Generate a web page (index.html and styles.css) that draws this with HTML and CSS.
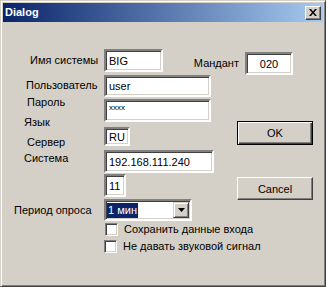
FILE: index.html
```html
<!DOCTYPE html>
<html>
<head>
<meta charset="utf-8">
<link rel="stylesheet" href="styles.css">
</head>
<body>
<div class="window">
  <div class="titlebar">
    <span class="title">Dialog</span>
    <span class="close"><svg width="8" height="7" viewBox="0 0 8 7"><path d="M0 0h2l2 2.5L6 0h2L5 3.5 8 7H6L4 4.5 2 7H0l3-3.5z" fill="#000"/></svg></span>
  </div>
  <div class="client">
    <div class="labels">
      <div class="label l-name">Имя системы</div>
      <div class="label l-user">Пользователь</div>
      <div class="label l-pass">Пароль</div>
      <div class="label l-lang">Язык</div>
      <div class="label l-server">Сервер</div>
      <div class="label l-system">Система</div>
      <div class="label l-period">Период опроса</div>
    </div>
    <div class="controls">
      <div class="row r1">
        <div class="edit e-name">BIG</div>
        <div class="label mandant-label">Мандант</div>
        <div class="edit e-mandant">020</div>
      </div>
      <div class="row r2"><div class="edit e-user">user</div></div>
      <div class="row r3"><div class="edit e-pass"><span class="stars">xxxx</span></div></div>
      <div class="row r4">
        <div class="edit e-lang">RU</div>
        <div class="button default">OK</div>
      </div>
      <div class="row r5"><div class="edit e-ip">192.168.111.240</div></div>
      <div class="row r6">
        <div class="edit e-num">11</div>
        <div class="button cancel">Cancel</div>
      </div>
      <div class="row r7">
        <div class="combo">
          <span class="combo-value"><span class="selected">1 мин</span></span>
          <span class="combo-btn"><svg width="7" height="4" viewBox="0 0 7 4"><path d="M0 0h7L3.5 4z" fill="#000"/></svg></span>
        </div>
      </div>
      <div class="row r8"><span class="check c1"></span><span class="check-text">Сохранить данные входа</span></div>
      <div class="row r9"><span class="check c2"></span><span class="check-text">Не давать звуковой сигнал</span></div>
    </div>
  </div>
</div>
</body>
</html>
```
FILE: styles.css
```css
html, body {
  margin: 0;
  padding: 0;
  background: #D4D0C8;
}
body {
  font-family: "Liberation Sans", Arial, sans-serif;
  font-size: 11px;
  color: #000;
}
.window {
  box-sizing: border-box;
  width: 326px;
  height: 287px;
  background: #D4D0C8;
  border: 1px solid;
  border-color: #D4D0C8 #404040 #404040 #D4D0C8;
  box-shadow: inset 1px 1px #FFFFFF, inset -1px -1px #808080;
  padding: 2px;
  display: flex;
  flex-direction: column;
}
.titlebar {
  height: 19px;
  flex: none;
  background: linear-gradient(to right, #0A246A, #A6CAF0);
  display: flex;
  align-items: center;
  justify-content: space-between;
  padding: 0 2px 0 2px;
}
.title {
  color: #fff;
  font-weight: bold;
  font-size: 11px;
  line-height: 13px;
}
.close {
  box-sizing: border-box;
  width: 16px;
  height: 14px;
  background: #D4D0C8;
  border-top: 1px solid #fff;
  border-left: 1px solid #fff;
  border-right: 1px solid #404040;
  border-bottom: 1px solid #404040;
  box-shadow: inset -1px -1px #808080;
  display: flex;
  align-items: center;
  justify-content: center;
  padding: 0 1px 1px 0;
  margin-top: 1px;
}
.close svg { display: block; }
.client {
  flex: 1;
  display: flex;
}
.labels {
  width: 101px;
  flex: none;
  display: flex;
  flex-direction: column;
}
.label {
  line-height: 13px;
  height: 13px;
  white-space: nowrap;
}
.l-name { margin-top: 32px; margin-left: 27px; }
.l-user { margin-top: 12px; margin-left: 23px; }
.l-pass { margin-top: 4px; margin-left: 24px; }
.l-lang { margin-top: 7px; margin-left: 21px; }
.l-server { margin-top: 7px; margin-left: 24px; }
.l-system { margin-top: 3px; margin-left: 21px; }
.l-period { margin-top: 39px; margin-left: 11px; }

.controls {
  flex: 1;
  display: flex;
  flex-direction: column;
  padding-top: 27px;
}
.row {
  display: flex;
  align-items: flex-start;
}
.edit {
  box-sizing: border-box;
  background: #fff;
  border: 2px solid;
  border-color: #808080 #FFFFFF #FFFFFF #808080;
  box-shadow: inset 1px 1px #404040, inset -1px -1px #D4D0C8;
  display: flex;
  align-items: center;
  padding: 0 0 0 3px;
  height: 23px;
  white-space: nowrap;
}
.e-name { width: 59px; }
.mandant-label { margin-left: auto; margin-top: 8px; }
.e-mandant { width: 48px; margin: 3px 30px 0 6px; justify-content: center; padding: 0; }
.r2 .e-user { width: 107px; height: 22px; }
.r3 { margin-top: 2px; }
.e-pass { width: 107px; align-items: flex-start; padding-top: 3px; }
.stars { font-size: 8px; line-height: 8px; letter-spacing: 0; }
.r4 { margin-top: -1px; }
.e-lang { width: 26px; height: 19px; margin-top: 6px; }
.button {
  box-sizing: border-box;
  width: 76px;
  background: #D4D0C8;
  display: flex;
  align-items: center;
  justify-content: center;
  margin-left: auto;
  margin-right: 10px;
}
.default {
  height: 24px;
  border: 1px solid #000;
  box-shadow: inset 1px 1px #fff, inset -1px -1px #404040, inset -2px -2px #808080;
}
.cancel {
  height: 23px;
  margin-top: 3px;
  border-top: 1px solid #fff;
  border-left: 1px solid #fff;
  border-right: 1px solid #404040;
  border-bottom: 1px solid #404040;
  box-shadow: inset -1px -1px #808080;
}
.r5 { margin-top: 4px; }
.e-ip { width: 110px; }
.r6 { margin-top: 1px; }
.e-num { width: 22px; }
.r7 { margin-top: -1px; }
.combo {
  box-sizing: border-box;
  width: 88px;
  height: 22px;
  background: #fff;
  border: 2px solid;
  border-color: #808080 #FFFFFF #FFFFFF #808080;
  box-shadow: inset 1px 1px #404040, inset -1px -1px #D4D0C8;
  display: flex;
  padding: 1px 1px 1px 1px;
}
.combo-value {
  flex: 1;
  display: flex;
  align-items: center;
  padding-left: 0;
}
.selected {
  background: #0A246A;
  color: #fff;
  line-height: 15px;
  padding: 0 1px 0 1px;
}
.combo-btn {
  box-sizing: border-box;
  width: 16px;
  background: #D4D0C8;
  border-top: 1px solid #D4D0C8;
  border-left: 1px solid #D4D0C8;
  border-right: 1px solid #404040;
  border-bottom: 1px solid #404040;
  box-shadow: inset 1px 1px #fff, inset -1px -1px #808080;
  display: flex;
  align-items: center;
  justify-content: center;
}
.combo-btn svg { display: block; }
.r8 { margin-top: 2px; align-items: center; }
.r9 { margin-top: 4px; align-items: center; }
.check {
  box-sizing: border-box;
  width: 13px;
  height: 13px;
  background: #fff;
  border: 1px solid;
  border-color: #808080 #FFFFFF #FFFFFF #808080;
  box-shadow: inset 1px 1px #404040, inset -1px -1px #D4D0C8;
  flex: none;
}
.c1 { margin-left: 1px; }
.c2 { margin-left: 0; }
.check-text { margin-left: 6px; line-height: 13px; white-space: nowrap; }
```
